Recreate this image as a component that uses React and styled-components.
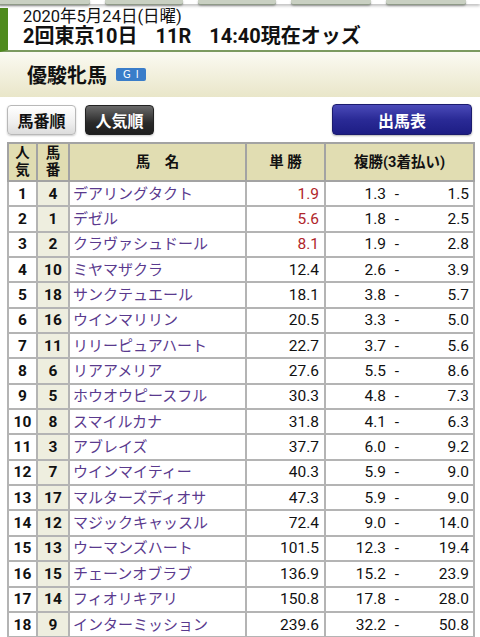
import React from 'react';
import styled, { createGlobalStyle } from 'styled-components';

const GlobalStyle = createGlobalStyle`
  body {
    margin: 0;
    background: #fff;
    font-family: Roboto, "Noto Sans CJK JP", "Noto Sans", sans-serif;
    color: #111;
  }
`;

const horses = [
  [1, 4, 'デアリングタクト', '1.9', '1.3', '1.5'],
  [2, 1, 'デゼル', '5.6', '1.8', '2.5'],
  [3, 2, 'クラヴァシュドール', '8.1', '1.9', '2.8'],
  [4, 10, 'ミヤマザクラ', '12.4', '2.6', '3.9'],
  [5, 18, 'サンクテュエール', '18.1', '3.8', '5.7'],
  [6, 16, 'ウインマリリン', '20.5', '3.3', '5.0'],
  [7, 11, 'リリーピュアハート', '22.7', '3.7', '5.6'],
  [8, 6, 'リアアメリア', '27.6', '5.5', '8.6'],
  [9, 5, 'ホウオウピースフル', '30.3', '4.8', '7.3'],
  [10, 8, 'スマイルカナ', '31.8', '4.1', '6.3'],
  [11, 3, 'アブレイズ', '37.7', '6.0', '9.2'],
  [12, 7, 'ウインマイティー', '40.3', '5.9', '9.0'],
  [13, 17, 'マルターズディオサ', '47.3', '5.9', '9.0'],
  [14, 12, 'マジックキャッスル', '72.4', '9.0', '14.0'],
  [15, 13, 'ウーマンズハート', '101.5', '12.3', '19.4'],
  [16, 15, 'チェーンオブラブ', '136.9', '15.2', '23.9'],
  [17, 14, 'フィオリキアリ', '150.8', '17.8', '28.0'],
  [18, 9, 'インターミッション', '239.6', '32.2', '50.8'],
];

const Page = styled.div`
  width: 480px;
  overflow: hidden;
`;

const TabStrip = styled.div`
  display: flex;
  gap: 15px;
  height: 4px;
  margin-left: -2px;
  box-shadow: 0 2px 3px rgba(0, 0, 0, 0.25);
  position: relative;
  z-index: 1;
`;

const Tab = styled.div`
  width: ${p => p.$w}px;
  height: 4px;
  background: #c9d0c2;
  border-bottom: 1px solid #8f9a88;
  border-radius: 0 0 3px 3px;
  box-shadow: 0 1px 2px rgba(0, 0, 0, 0.3);
`;

const RaceHead = styled.div`
  margin-top: 4px;
  border-left: 8px solid #4f8a1e;
  border-bottom: 2px solid #7c9a60;
  padding: 0 0 3px 15px;
`;

const RaceDate = styled.div`
  font-size: 16.5px;
  line-height: 17px;
  color: #111;
`;

const RaceTitle = styled.div`
  font-size: 20px;
  font-weight: bold;
  line-height: 21px;
  margin-top: 1px;
  span { margin-right: 18px; }
`;

const NameBand = styled.div`
  height: 45px;
  display: flex;
  align-items: center;
  padding: 0 0 0 27px;
  background: linear-gradient(#fbfaf2, #e9e6c9);
`;

const RaceName = styled.h1`
  margin: 0;
  font-size: 20px;
  font-weight: bold;
  color: #111;
`;

const Grade = styled.span`
  margin-left: 9px;
  background: #3a7dc9;
  color: #fff;
  font-size: 10px;
  letter-spacing: 5px;
  padding: 0 2px 0 7px;
  border-radius: 2px;
  line-height: 13px;
  font-family: "DejaVu Sans", sans-serif;
`;

const Controls = styled.div`
  display: flex;
  align-items: center;
  padding: 7px 8px 0 7px;
  height: 31px;
`;

const SortButton = styled.button`
  width: 69px;
  height: 30px;
  margin-right: 9px;
  border-radius: 4px;
  font-family: inherit;
  font-size: 16px;
  font-weight: bold;
  cursor: pointer;
  border: 1px solid ${p => (p.$active ? '#222' : '#b8b8b8')};
  color: ${p => (p.$active ? '#fff' : '#111')};
  background: ${p =>
    p.$active
      ? 'linear-gradient(#6a6a6a, #2a2a2a 60%, #1e1e1e)'
      : 'linear-gradient(#ffffff, #eeeeee 60%, #dcdcdc)'};
  box-shadow: 0 1px 2px rgba(0, 0, 0, 0.2);
`;

const EntryButton = styled.button`
  margin-left: auto;
  width: 140px;
  height: 31px;
  border: 1px solid #1b1b6e;
  border-radius: 4px;
  background: linear-gradient(#4a4ab8, #2a2a96 50%, #1d1d84);
  color: #fff;
  font-family: inherit;
  font-size: 16px;
  font-weight: bold;
  box-shadow: 0 1px 2px rgba(0, 0, 0, 0.3);
`;

const Table = styled.table`
  margin: 7px 0 0 7px;
  width: 466px;
  border-collapse: collapse;
  table-layout: fixed;
  border: 2px solid #a3a3a3;
`;

const Th = styled.th`
  background: #e1ddb2;
  border: 2px solid #a3a3a3;
  height: 36px;
  padding: 0;
  font-size: 14.5px;
  line-height: 17px;
  font-weight: bold;
  color: #111;
  text-align: center;
`;

const Td = styled.td`
  border: 2px solid #b4b4b4;
  height: 23.35px;
  padding: 0 ${p => p.$pad || 0}px;
  font-size: 15.5px;
  line-height: 18px;
  text-align: ${p => p.$align || 'left'};
  font-weight: ${p => (p.$bold ? 'bold' : 'normal')};
  color: ${p => p.$color || '#111'};
  background: ${p => p.$bg || '#fff'};
  white-space: nowrap;
`;

const Name = styled(Td)`
  font-size: 15px;
`;

const Place = styled.div`
  display: flex;
  align-items: center;
`;

const PlaceLow = styled.span`
  width: 56px;
  text-align: right;
`;

const Dash = styled.span`
  width: 14px;
  text-align: center;
  margin-left: 4px;
`;

const PlaceHigh = styled.span`
  flex: 1;
  text-align: right;
`;

export default function App() {
  return (
    <Page>
      <GlobalStyle />
      <TabStrip>
        {[92, 78, 78, 80, 80].map((w, i) => (
          <Tab key={i} $w={w} />
        ))}
      </TabStrip>
      <RaceHead>
        <RaceDate>2020年5月24日(日曜)</RaceDate>
        <RaceTitle>
          <span>2回東京10日</span>
          <span>11R</span>
          14:40現在オッズ
        </RaceTitle>
      </RaceHead>
      <NameBand>
        <RaceName>優駿牝馬</RaceName>
        <Grade>GI</Grade>
      </NameBand>
      <Controls>
        <SortButton>馬番順</SortButton>
        <SortButton $active>人気順</SortButton>
        <EntryButton>出馬表</EntryButton>
      </Controls>
      <Table>
        <colgroup>
          <col style={{ width: 29 }} />
          <col style={{ width: 32 }} />
          <col style={{ width: 177 }} />
          <col style={{ width: 79 }} />
          <col style={{ width: 149 }} />
        </colgroup>
        <thead>
          <tr>
            <Th>人<br />気</Th>
            <Th>馬<br />番</Th>
            <Th>馬　名</Th>
            <Th>単 勝</Th>
            <Th>複勝(3着払い)</Th>
          </tr>
        </thead>
        <tbody>
          {horses.map(([rank, num, name, win, lo, hi]) => (
            <tr key={rank}>
              <Td $align="center" $bold>{rank}</Td>
              <Td $align="center" $bold $bg="#eeeedf">{num}</Td>
              <Name $pad={3} $color="#5a3a8e">{name}</Name>
              <Td $align="right" $pad={5} $color={rank <= 3 ? '#b0262a' : '#111'}>{win}</Td>
              <Td $pad={4}>
                <Place>
                  <PlaceLow>{lo}</PlaceLow>
                  <Dash>-</Dash>
                  <PlaceHigh>{hi}</PlaceHigh>
                </Place>
              </Td>
            </tr>
          ))}
        </tbody>
      </Table>
    </Page>
  );
}
